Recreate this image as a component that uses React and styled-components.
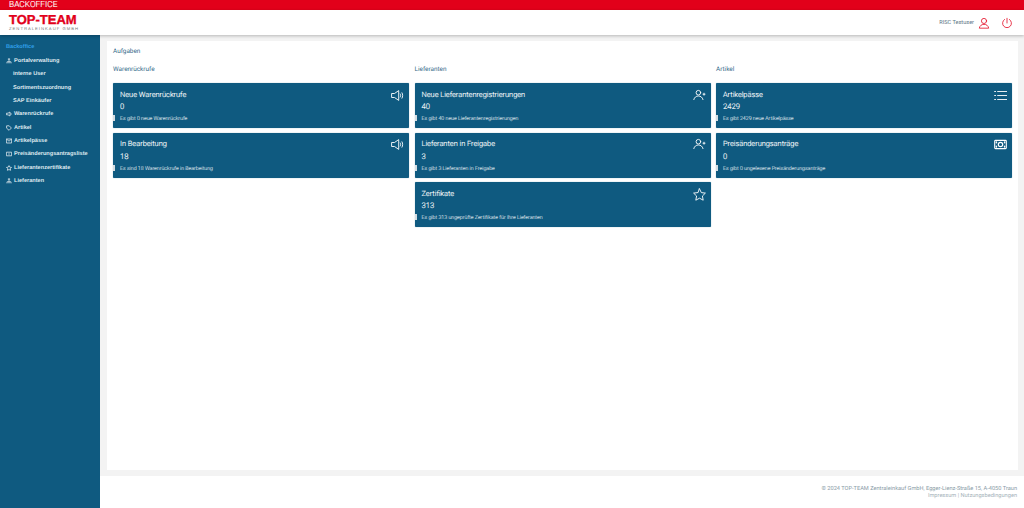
import React from "react";
import styled, { createGlobalStyle } from "styled-components";

const Global = createGlobalStyle`
  html, body { margin: 0; padding: 0; height: 100%; }
  body { font-family: Roboto, "Liberation Sans", sans-serif; background: #f3f3f3; text-rendering: geometricPrecision; }
  * { box-sizing: border-box; }
`;

const Page = styled.div`
  width: 1024px; height: 508px; display: flex; flex-direction: column; overflow: hidden;
`;
const RedBar = styled.div`
  height: 10px; background: #e2001a; color: #fff; font-size: 8.4px; font-weight: 300; line-height: 10px;
  padding-left: 9px; flex: none; -webkit-text-stroke: .15px #fff;
`;
const Header = styled.header`
  height: 25px; background: #fff; display: flex; align-items: center; justify-content: space-between;
  padding: 0 11px 0 9px; flex: none; box-shadow: 0 1px 3px rgba(0,0,0,.25); position: relative; z-index: 1;
`;
const Logo = styled.div`
  display: flex; flex-direction: column; width: 68px; margin-top: -1px;
`;
const LogoMain = styled.div`
  font: 700 13px/12px "Liberation Sans", Arial, sans-serif; color: #e2001a; white-space: nowrap;
  -webkit-text-stroke: .35px #e2001a;
`;
const LogoSub = styled.div`
  font: 400 4.2px/5px "Liberation Sans", Arial, sans-serif; color: #777; letter-spacing: 1px; white-space: nowrap;
`;
const HeaderRight = styled.div`
  display: flex; align-items: center;
`;
const UserName = styled.span`
  font-size: 5.6px; color: #5d7686; margin-right: 4px;
`;
const HeaderIcon = styled.svg`
  width: 12px; height: 12px; fill: none; stroke: #e2001a; stroke-width: .9; stroke-linecap: round; stroke-linejoin: round; display: block;
  margin-left: ${p => p.$gap || 0}px;
`;
const Body = styled.div`
  flex: 1; display: flex; min-height: 0;
`;
const Sidebar = styled.nav`
  width: 100px; background: #0f5a80; flex: none; padding: 7px 0 0 6px; display: flex; flex-direction: column;
`;
const SideTitle = styled.div`
  font: 700 5.6px/10px "Liberation Sans", Arial, sans-serif; color: #2f9fe8; height: 12.3px;
`;
const SideItem = styled.div`
  display: flex; align-items: center; gap: 2px; height: 13.33px; color: #dfe9ef;
  font: 700 5.6px/10px "Liberation Sans", Arial, sans-serif; white-space: nowrap;
  padding-left: ${p => p.$sub ? 7 : 0}px;
`;
const SideIcon = styled.svg`
  width: 6px; height: 6px; fill: none; stroke: #dfe8ee; stroke-width: .8; flex: none;
`;
const Main = styled.main`
  flex: 1; display: flex; flex-direction: column; min-width: 0;
`;
const Panel = styled.section`
  flex: 1; margin: 6px 6px 6px 7px; background: #fff; padding: 6px 6px 0;
`;
const PanelTitle = styled.div`
  font-size: 6.4px; line-height: 8px; color: #356b8a; margin-bottom: 10px;
`;
const Columns = styled.div`
  display: grid; grid-template-columns: repeat(3, 296px); column-gap: 5.5px;
`;
const Column = styled.div`
  display: flex; flex-direction: column; gap: 4.4px;
`;
const ColumnTitle = styled.div`
  font-size: 6.4px; line-height: 8px; color: #356b8a; margin-bottom: 6px; height: 8px;
`;
const Card = styled.article`
  position: relative; height: 45px; background: #0f5a80; border-radius: 1px; color: #fff; padding: 6.4px 7px 0;
  box-shadow: 0 0 1px rgba(15,90,128,.6);
`;
const CardTitle = styled.div`
  font-size: 7.4px; font-weight: 300; line-height: 10px; color: #fff; -webkit-text-stroke: .12px #fff;
`;
const CardValue = styled.div`
  font-size: 7.7px; font-weight: 300; line-height: 10px; margin-top: 2.4px; color: #fff; -webkit-text-stroke: .12px #fff;
`;
const CardNote = styled.div`
  font-size: 5.25px; font-weight: 300; line-height: 7px; margin-top: 4.2px; color: #e4edf2; -webkit-text-stroke: .06px #e4edf2;
`;
const Tick = styled.span`
  position: absolute; left: 0; top: 32px; width: 2px; height: 6px; background: #d5dde2;
`;
const CardIcon = styled.svg`
  position: absolute; right: 5px; top: 5.5px; width: 13px; height: 13px; fill: none; stroke: #fff; stroke-width: .9; stroke-linecap: round; stroke-linejoin: round;
`;
const Footer = styled.footer`
  height: 32px; background: #fff; flex: none; text-align: right; padding: 10px 7px 0 0;
  font-size: 5.65px; line-height: 7px; color: #8a9ca7;
`;
const FooterLight = styled.div`
  color: #a5b2ba;
`;

const Megaphone = () => (
  <CardIcon viewBox="0 0 13 13">
    <path d="M1 4.5h2.5L7.7 1.6v9.8L3.5 8.5H1z" />
    <path d="M9.3 5c.5.9.5 2.1 0 3M11 3.8c.9 1.6.9 3.8 0 5.4" />
  </CardIcon>
);
const UserPlus = () => (
  <CardIcon viewBox="0 0 13 13">
    <circle cx="5.4" cy="3.7" r="2.3" />
    <path d="M.8 10.6c.6-2.4 2.4-3.6 4.6-3.6s4 1.2 4.6 3.6" />
    <path d="M11 4.2v2M10 5.2h2" />
  </CardIcon>
);
const Star = () => (
  <CardIcon viewBox="0 0 13 13">
    <path d="M6.5.8l1.8 3.8 4.1.5-3 2.9.8 4.2-3.7-2-3.7 2 .8-4.2-3-2.9 4.1-.5z" />
  </CardIcon>
);
const ListIcon = () => (
  <CardIcon viewBox="0 0 13 13">
    <path d="M3.6 2.5H12.6M3.6 6.5H12.6M3.6 10.5H12.6M.6 2.5h1M.6 6.5h1M.6 10.5h1" />
  </CardIcon>
);
const Money = () => (
  <CardIcon viewBox="0 0 13 13">
    <rect x=".7" y="2.4" width="11.6" height="8.2" rx=".8" strokeWidth="1.1" />
    <circle cx="6.5" cy="6.5" r="2.2" strokeWidth="1.2" />
    <path d="M2.4 4v.8M10.6 4v.8M2.4 8.2V9M10.6 8.2V9" strokeWidth="1.5" />
  </CardIcon>
);

const columns = [
  { title: "Warenrückrufe", cards: [
    { t: "Neue Warenrückrufe", v: "0", n: "Es gibt 0 neue Warenrückrufe", I: Megaphone },
    { t: "In Bearbeitung", v: "18", n: "Es sind 18 Warenrückrufe in Bearbeitung", I: Megaphone },
  ]},
  { title: "Lieferanten", cards: [
    { t: "Neue Lieferantenregistrierungen", v: "40", n: "Es gibt 40 neue Lieferantenregistrierungen", I: UserPlus },
    { t: "Lieferanten in Freigabe", v: "3", n: "Es gibt 3 Lieferanten in Freigabe", I: UserPlus },
    { t: "Zertifikate", v: "313", n: "Es gibt 313 ungeprüfte Zertifikate für Ihre Lieferanten", I: Star },
  ]},
  { title: "Artikel", cards: [
    { t: "Artikelpässe", v: "2429", n: "Es gibt 2429 neue Artikelpässe", I: ListIcon },
    { t: "Preisänderungsanträge", v: "0", n: "Es gibt 0 ungelesene Preisänderungsanträge", I: Money },
  ]},
];

const sideIcons = {
  org: <path d="M3 .6a.7.7 0 1 0 .01 0M1 5.4V3.8h4v1.6M3 2.2v3.2" />,
  horn: <path d="M.5 2.2h1.5L4 1v4L2 3.8H.5zM5 2.2v1.6" />,
  tag: <path d="M.6.8h2.6l2.2 2.2-2.3 2.3L.6 3.2z" />,
  mail: <path d="M.4 1h5.2v4H.4zM.4 1l2.6 2.2L5.6 1" />,
  money: <path d="M.4 1.2h5.2v3.6H.4zM2.2 3h1.6" />,
  star: <path d="M3 .6l.8 1.6 1.7.2-1.2 1.2.3 1.7L3 4.5l-1.6.8.3-1.7L.5 2.4l1.7-.2z" />,
};

const menu = [
  { l: "Portalverwaltung", i: "org" },
  { l: "interne User", sub: true },
  { l: "Sortimentszuordnung", sub: true },
  { l: "SAP Einkäufer", sub: true },
  { l: "Warenrückrufe", i: "horn" },
  { l: "Artikel", i: "tag" },
  { l: "Artikelpässe", i: "mail" },
  { l: "Preisänderungsantragsliste", i: "money" },
  { l: "Lieferantenzertifikate", i: "star" },
  { l: "Lieferanten", i: "org" },
];

export default function App() {
  return (
    <Page>
      <Global />
      <RedBar>BACKOFFICE</RedBar>
      <Header>
        <Logo>
          <LogoMain>TOP-TEAM</LogoMain>
          <LogoSub>ZENTRALEINKAUF GMBH</LogoSub>
        </Logo>
        <HeaderRight>
          <UserName>RISC Testuser</UserName>
          <HeaderIcon viewBox="0 0 14 14">
            <circle cx="7" cy="4.6" r="3" />
            <path d="M1.6 12.6c.5-2.6 2.6-4 5.4-4s4.9 1.4 5.4 4z" />
          </HeaderIcon>
          <HeaderIcon viewBox="0 0 14 14" $gap={11}>
            <path d="M7 1.5v5.5M4.2 2.8a5.2 5.2 0 1 0 5.6 0" />
          </HeaderIcon>
        </HeaderRight>
      </Header>
      <Body>
        <Sidebar>
          <SideTitle>Backoffice</SideTitle>
          {menu.map(m => (
            <SideItem key={m.l} $sub={m.sub}>
              {m.i && <SideIcon viewBox="0 0 6 6">{sideIcons[m.i]}</SideIcon>}
              {m.l}
            </SideItem>
          ))}
        </Sidebar>
        <Main>
          <Panel>
            <PanelTitle>Aufgaben</PanelTitle>
            <Columns>
              {columns.map(c => (
                <Column key={c.title}>
                  <ColumnTitle>{c.title}</ColumnTitle>
                  {c.cards.map(card => (
                    <Card key={card.t}>
                      <CardTitle>{card.t}</CardTitle>
                      <CardValue>{card.v}</CardValue>
                      <CardNote>{card.n}</CardNote>
                      <Tick />
                      <card.I />
                    </Card>
                  ))}
                </Column>
              ))}
            </Columns>
          </Panel>
          <Footer>
            <div>© 2024 TOP-TEAM Zentraleinkauf GmbH, Egger-Lienz-Straße 15, A-4050 Traun</div>
            <FooterLight>Impressum | Nutzungsbedingungen</FooterLight>
          </Footer>
        </Main>
      </Body>
    </Page>
  );
}
